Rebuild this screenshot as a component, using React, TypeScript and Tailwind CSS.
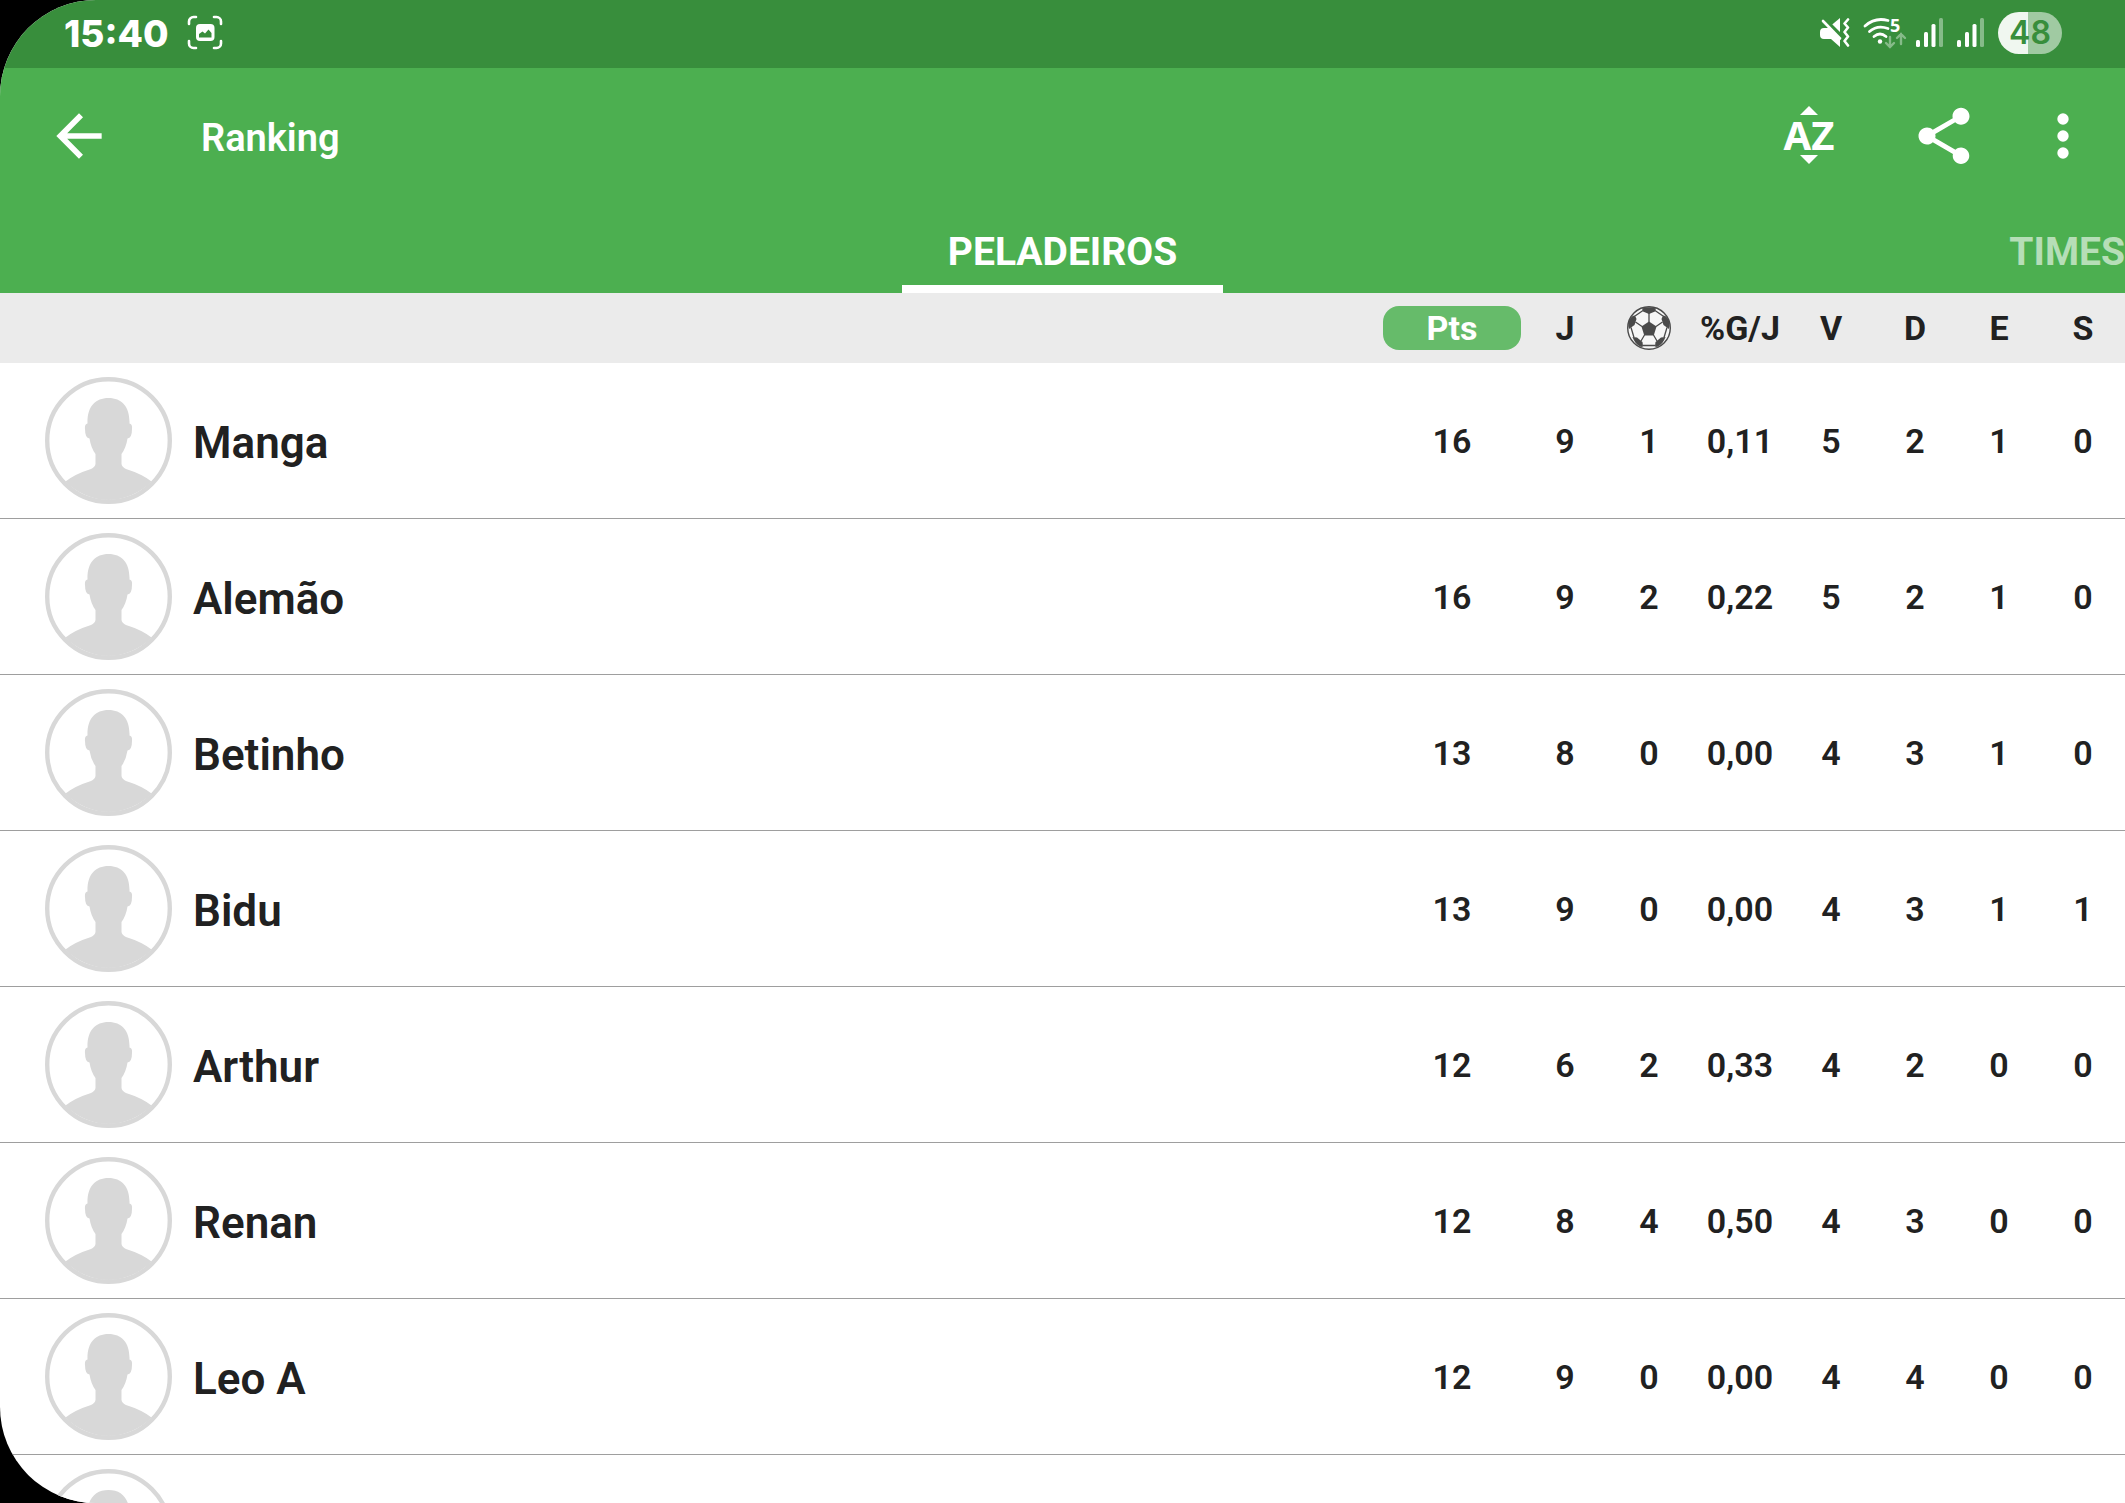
import React from "react";

type Player = { name: string; stats: string[] };

const players: Player[] = [
  { name: "Manga", stats: ["16", "9", "1", "0,11", "5", "2", "1", "0"] },
  { name: "Alemão", stats: ["16", "9", "2", "0,22", "5", "2", "1", "0"] },
  { name: "Betinho", stats: ["13", "8", "0", "0,00", "4", "3", "1", "0"] },
  { name: "Bidu", stats: ["13", "9", "0", "0,00", "4", "3", "1", "1"] },
  { name: "Arthur", stats: ["12", "6", "2", "0,33", "4", "2", "0", "0"] },
  { name: "Renan", stats: ["12", "8", "4", "0,50", "4", "3", "0", "0"] },
  { name: "Leo A", stats: ["12", "9", "0", "0,00", "4", "4", "0", "0"] },
  { name: "", stats: ["", "", "", "", "", "", "", ""] },
];

function CaptureIcon() {
  return (
    <svg viewBox="0 0 36 36" className="size-9" fill="none" aria-hidden="true">
      <path
        d="M2 9V6.500a4.500 4.500 0 0 1 4.500-4.500H9M27 2h2.500a4.500 4.500 0 0 1 4.500 4.500V9M34 26v2.500a4.500 4.500 0 0 1-4.500 4.500H27M9 33H6.500a4.500 4.500 0 0 1-4.500-4.500V26"
        stroke="#fff"
        strokeWidth="2.600"
        strokeLinecap="round"
      />
      <rect x="9" y="9" width="18.500" height="17" rx="4" fill="#fff" />
      <path d="M12 22.500v-3.500l3.500-2.500 2.500 2 3.500-4 3 3.500v4.500z" fill="#388e3c" />
    </svg>
  );
}

function MuteIcon() {
  return (
    <svg viewBox="0 0 30 30" className="size-[30px]" aria-hidden="true">
      <path d="M0 14q0-4 4-4h5L20 21v8l-9-8H4q-4 0-4-4z" fill="#fff" />
      <path d="M11 7.500L20 0v16z" fill="#fff" />
      <path d="M6.500 2.500l16 16" stroke="#388e3c" strokeWidth="2.600" />
      <path d="M3 3l17 17.500" stroke="#fff" strokeWidth="2.600" strokeLinecap="round" />
      <path
        d="M28 1.500l-3.500 4 3.500 4-3.500 4.500 3.500 4.500-3.500 4.500 3.500 4.500"
        stroke="#fff"
        strokeWidth="2.600"
        fill="none"
        strokeLinecap="round"
        strokeLinejoin="round"
      />
    </svg>
  );
}

function WifiIcon() {
  return (
    <svg viewBox="0 0 43 32" className="h-8 w-[43px] overflow-visible" fill="none" strokeLinecap="round" aria-hidden="true">
      <g stroke="#fff" strokeWidth="2.800">
        <path d="M2 9Q12 0 25 3.500" />
        <path d="M6.500 14.500Q14.500 7.500 25 11.500" />
        <path d="M11 19.500q6-5 12 0" />
      </g>
      <circle cx="17" cy="24.500" r="2.200" fill="#fff" />
      <text x="27" y="15" fontSize="18" fontWeight="700" fontFamily="Noto Sans, sans-serif" fill="#fff">5</text>
      <path d="M27 20v10m-4-4 4 4 4-4M38 27V17m-4 4 4-4 4 4" stroke="#86bb89" strokeWidth="2.400" />
    </svg>
  );
}

function SignalIcon() {
  return (
    <svg viewBox="0 0 28 30" className="h-[30px] w-7" aria-hidden="true">
      <rect x="0" y="22" width="4" height="7" rx="1.500" fill="#fff" />
      <rect x="8" y="14" width="4" height="15" rx="1.500" fill="#fff" />
      <rect x="15.500" y="6" width="4" height="23" rx="1.500" fill="#fff" />
      <rect x="23" y="0" width="4" height="29" rx="1.500" fill="#86bb89" />
    </svg>
  );
}

function BallIcon() {
  return (
    <svg viewBox="0 0 44 44" className="mx-auto size-11" role="img" aria-label="Gols">
      <circle cx="22" cy="22" r="21.300" fill="#f6f6f6" stroke="#4a4a4a" strokeWidth="1.400" />
      <g fill="#4a4a4a">
        <path d="M22 15.500l7.500 5-2.800 9h-9.400l-2.800-9z" />
        <path d="M15 2.500Q22 0 29 2.500l-1 3-6 2.500-6-2.500z" />
        <path d="M3.500 12Q5.500 9 8 9.500L9.500 13 7.500 19 2 23Q0 17 3.500 12z" />
        <path d="M40.500 12Q38.500 9 36 9.500L34.500 13 36.500 19 42 23Q44 17 40.500 12z" />
        <path d="M5.500 31l4.500.5 5.500 4.500.5 4.500-2 .5Q8 38.500 5.500 31z" />
        <path d="M38.500 31l-4.500.5-5.500 4.500-.5 4.500 2 .5Q36 38.500 38.500 31z" />
      </g>
      <path
        d="M22 7v9M8.500 16l6.500 4.500M35.500 16l-6.500 4.500M17.500 29l-3.500 6M26.500 29l3.500 6M15.500 39.500h13M8 10l8-5.500M36 10l-8-5.500M4 21.500l3 10M40 21.500l-3 10"
        stroke="#4a4a4a"
        strokeWidth="1.300"
        fill="none"
      />
    </svg>
  );
}

function Avatar() {
  return (
    <svg viewBox="0 0 127 127" className="size-[127px] shrink-0" aria-hidden="true">
      <circle cx="63.500" cy="63.500" r="61.300" fill="#fff" stroke="#d8d8d8" strokeWidth="4.400" />
      <path
        d="M63.500 21C50 21 42 30 42.500 46.500Q39.500 47 40 52Q40 61 44.500 61.500Q46 71 50.500 77V87Q50 90 46 92Q30 97 20.500 104.500A59.500 59.500 0 0 0 106.500 104.500Q97 97 81 92Q77 90 76.500 87V77Q81 71 82.500 61.500Q87 61 87 52Q87.500 47 84.500 46.500C85 30 77 21 63.500 21Z"
        fill="#d8d8d8"
      />
    </svg>
  );
}

export default function App() {
  return (
    <div className="h-screen bg-black">
      <div className="flex h-full flex-col overflow-hidden rounded-l-[96px] bg-white font-[Roboto,sans-serif] text-[#212121]">
        <div className="flex h-[68px] shrink-0 items-center justify-between bg-[#388e3c] pr-[63px] pb-0.5 pl-16 text-white">
          <div className="flex items-center gap-[18px]">
            <span className="font-[Inter,sans-serif] text-[37px] leading-none font-extrabold">15:40</span>
            <CaptureIcon />
          </div>
          <div className="flex items-center gap-[13px]">
            <MuteIcon />
            <div className="flex items-center gap-2.5">
              <WifiIcon />
              <SignalIcon />
            </div>
            <SignalIcon />
            <span className="flex h-[42px] w-16 items-center justify-center rounded-full bg-linear-to-r from-[#f0f7f0] from-47% to-[#a0caa2] to-47% font-[Inter,sans-serif] text-[32px] leading-none font-semibold text-[#388e3c]">
              48
            </span>
          </div>
        </div>

        <header className="shrink-0 bg-[#4caf50] text-white">
          <div className="flex h-[136px] items-center pr-7 pl-[45px]">
            <button type="button" aria-label="Voltar">
              <svg viewBox="0 0 24 24" className="size-[68px]" fill="currentColor" aria-hidden="true">
                <path d="M20 11H7.830l5.590-5.590L12 4l-8 8 8 8 1.410-1.410L7.830 13H20v-2z" />
              </svg>
            </button>
            <h1 className="ml-[88px] flex-1 pt-1 text-[38px] leading-none font-semibold">Ranking</h1>
            <div className="flex items-center gap-[67px]">
              <button type="button" aria-label="Ordenar" className="flex w-[68px] flex-col items-center pb-0.5">
                <svg viewBox="0 0 18 9" className="h-[9px] w-[18px]" fill="currentColor" aria-hidden="true">
                  <path d="M9 0l9 9H0z" />
                </svg>
                <span className="font-['Noto_Sans',sans-serif] text-[40px] leading-10 font-bold">AZ</span>
                <svg viewBox="0 0 18 9" className="h-[9px] w-[18px]" fill="currentColor" aria-hidden="true">
                  <path d="M0 0h18L9 9z" />
                </svg>
              </button>
              <button type="button" aria-label="Compartilhar">
                <svg viewBox="0 0 24 24" className="size-[68px]" fill="currentColor" aria-hidden="true">
                  <path d="M18 16.080c-.76 0-1.440.3-1.960.77L8.910 12.700c.05-.23.09-.46.09-.7s-.04-.47-.09-.7l7.050-4.110c.54.5 1.250.81 2.040.81 1.660 0 3-1.340 3-3s-1.340-3-3-3-3 1.340-3 3c0 .24.04.47.09.7L8.040 9.810C7.500 9.310 6.790 9 6 9c-1.660 0-3 1.340-3 3s1.340 3 3 3c.79 0 1.500-.31 2.040-.81l7.120 4.160c-.05.21-.08.43-.08.65 0 1.610 1.310 2.920 2.920 2.920s2.920-1.310 2.920-2.920-1.310-2.920-2.920-2.920z" />
                </svg>
              </button>
              <button type="button" aria-label="Mais opções" className="-ml-4">
                <svg viewBox="0 0 24 24" className="size-[68px]" fill="currentColor" aria-hidden="true">
                  <circle cx="12" cy="6" r="2" />
                  <circle cx="12" cy="12" r="2" />
                  <circle cx="12" cy="18" r="2" />
                </svg>
              </button>
            </div>
          </div>
          <div role="tablist" className="grid h-[89px] grid-cols-[1fr_auto_1fr] text-[39px] leading-none font-bold">
            <span />
            <button type="button" role="tab" aria-selected="true" className="border-b-8 border-white px-[46px] pt-4">
              PELADEIROS
            </button>
            <button type="button" role="tab" aria-selected="false" className="justify-self-end border-b-8 border-transparent pt-4 text-white/60">
              TIMES
            </button>
          </div>
        </header>

        <main className="min-h-0 flex-1 overflow-hidden">
          <table className="w-full table-fixed border-separate border-spacing-0 text-center text-[34px] leading-none">
            <colgroup>
              <col />
              <col className="w-[142px]" />
              <col className="w-21" />
              <col className="w-21" />
              <col className="w-[98px]" />
              <col className="w-21" />
              <col className="w-21" />
              <col className="w-21" />
              <col className="w-21" />
            </colgroup>
            <thead>
              <tr className="h-[70px] bg-[#ebebeb]">
                <td />
                <th scope="col" className="px-0.5">
                  <button type="button" className="h-11 w-full rounded-2xl bg-[#66bb6a] font-bold text-white">
                    Pts
                  </button>
                </th>
                <th scope="col">J</th>
                <th scope="col">
                  <BallIcon />
                </th>
                <th scope="col">%G/J</th>
                <th scope="col">V</th>
                <th scope="col">D</th>
                <th scope="col">E</th>
                <th scope="col">S</th>
              </tr>
            </thead>
            <tbody>
              {players.map((player, i) => (
                <tr key={i} className="h-39">
                  <th scope="row" className="border-b border-[#9e9e9e] pl-[45px]">
                    <div className="flex items-center gap-[21px] text-left text-[44px] font-semibold">
                      <Avatar />
                      <span className="pt-1">{player.name}</span>
                    </div>
                  </th>
                  {player.stats.map((value, j) => (
                    <td key={j} className="border-b border-[#9e9e9e] font-semibold">
                      {value}
                    </td>
                  ))}
                </tr>
              ))}
            </tbody>
          </table>
        </main>
      </div>
    </div>
  );
}
